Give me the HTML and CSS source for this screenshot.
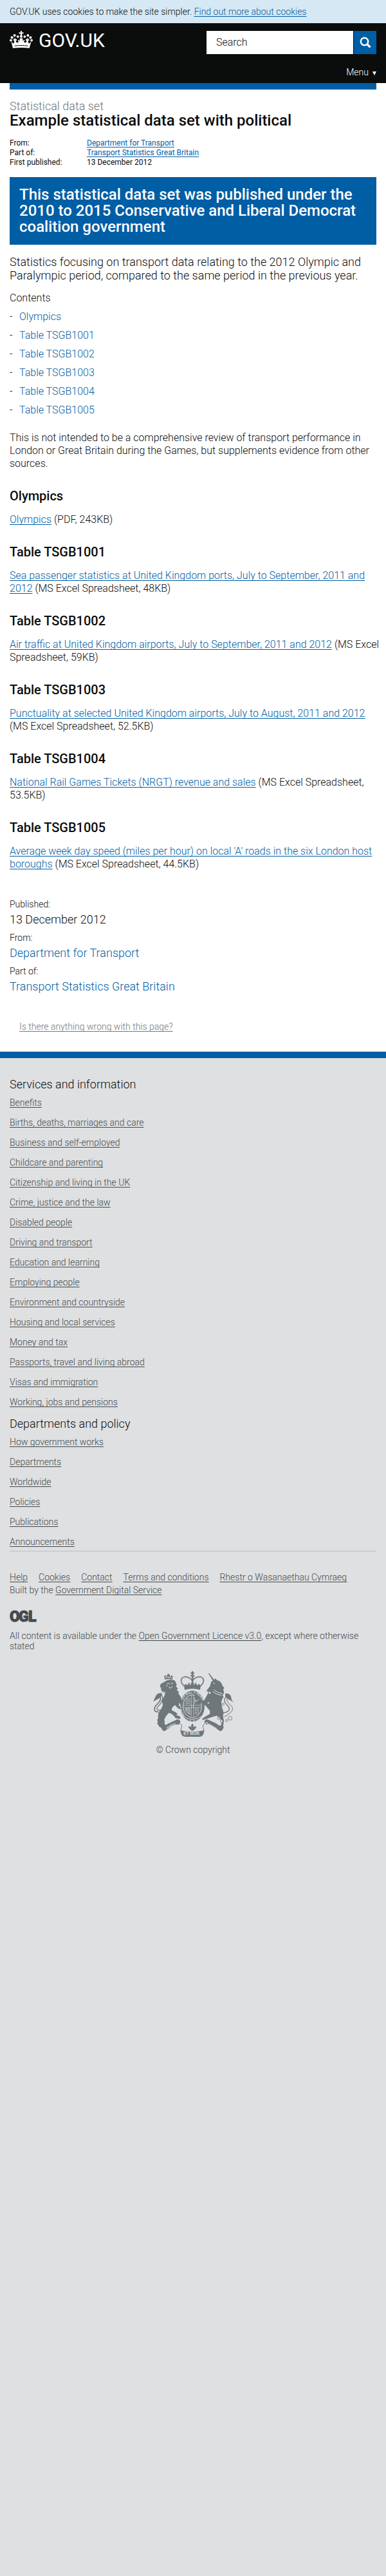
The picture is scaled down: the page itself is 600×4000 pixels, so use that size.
FILE: index.html
```html
<!DOCTYPE html>
<html lang="en">
<head>
<meta charset="utf-8">
<meta name="viewport" content="width=device-width, initial-scale=1">
<title>Example statistical data set with political - GOV.UK</title>
<link rel="stylesheet" href="styles.css">
</head>
<body>
<div class="cookie-bar"><p>GOV.UK uses cookies to make the site simpler. <a href="#">Find out more about cookies</a></p></div>

<header class="site-header">
  <div class="header-row">
    <a class="logo" href="#">
      <svg class="logo-crown" viewBox="0 0 36 27" aria-hidden="true" fill="currentColor">
        <path d="M16.8 0h2.4l-.5 2.5 2.7-.5v2.6l-2.5-.4.5 3.4h-2.8l.5-3.4-2.5.4V2l2.700.5z"/>
        <circle cx="18" cy="8.700" r="2"/>
        <circle cx="12.700" cy="8.800" r="1.900"/><circle cx="7.600" cy="7.100" r="2"/><circle cx="3.600" cy="10.200" r="2"/><circle cx="1.900" cy="14.600" r="1.900"/>
        <circle cx="23.300" cy="8.800" r="1.900"/><circle cx="28.400" cy="7.100" r="2"/><circle cx="32.400" cy="10.200" r="2"/><circle cx="34.100" cy="14.600" r="1.900"/>
        <path d="M2.4 16.4l3.5 3.4c1-1.2 1.5-3.2 1.3-5l-1.5.5v-2.6l1.8.5-.4-1.8h2.4l-.4 1.8 1.9-.5v2.6l-1.5-.5c.1 2 .8 3.5 2.3 3.5 1.400 0 2.300-1 2.400-2.500l-1.300.6v-2.600l1.600.4 1.500-2.700h4l1.500 2.700 1.600-.4v2.600l-1.300-.6c.1 1.500 1 2.500 2.400 2.500 1.500 0 2.200-1.500 2.300-3.500l-1.500.5v-2.600l1.900.5-.4-1.800h2.400l-.4 1.800 1.800-.5v2.600l-1.500-.5c-.2 1.800.3 3.800 1.300 5l3.500-3.400-3 10.400c-8-1.200-17.600-1.200-25.600 0z"/>
        <path d="M7.500 23.300c6.500-1 14.500-1 21 0" fill="none" stroke="#0b0c0c" stroke-width="1"/>
        <circle cx="15" cy="14" r="1" fill="#0b0c0c"/><circle cx="21" cy="14" r="1" fill="#0b0c0c"/>
      </svg>
      <span>GOV.UK</span>
    </a>
    <form class="search" role="search">
      <input class="search-field" type="search" placeholder="Search" aria-label="Search">
      <button class="search-button" type="button" aria-label="Search">
        <svg viewBox="0 0 18 18" aria-hidden="true" fill="none" stroke="currentColor"><circle cx="7.500" cy="7.500" r="5.700" stroke-width="2.400"/><path d="M11.500 11.500l5 4.800" stroke-width="3.200"/></svg>
      </button>
    </form>
  </div>
  <button class="menu" type="button">Menu <span class="menu-arrow"></span></button>
</header>

<main class="content">
  <div class="top-bar"></div>
  <div class="title">
    <p class="context">Statistical data set</p>
    <h1>Example statistical data set with political</h1>
  </div>
  <dl class="meta">
    <dt>From:</dt><dd><a href="#">Department for Transport</a></dd>
    <dt>Part of:</dt><dd><a href="#">Transport Statistics Great Britain</a></dd>
    <dt>First published:</dt><dd>13 December 2012</dd>
  </dl>
  <p class="notice">This statistical data set was published under the 2010 to 2015 Conservative and Liberal Democrat coalition government</p>
  <p class="lead">Statistics focusing on transport data relating to the 2012 Olympic and Paralympic period, compared to the same period in the previous year.</p>
  <nav class="contents" aria-labelledby="contents-title">
    <h2 id="contents-title">Contents</h2>
    <ul>
      <li><a href="#olympics">Olympics</a></li>
      <li><a href="#t1001">Table TSGB1001</a></li>
      <li><a href="#t1002">Table TSGB1002</a></li>
      <li><a href="#t1003">Table TSGB1003</a></li>
      <li><a href="#t1004">Table TSGB1004</a></li>
      <li><a href="#t1005">Table TSGB1005</a></li>
    </ul>
  </nav>
  <article class="prose">
    <p>This is not intended to be a comprehensive review of transport performance in London or Great Britain during the Games, but supplements evidence from other sources.</p>
    <h2 id="olympics">Olympics</h2>
    <p><a href="#">Olympics</a> (PDF, 243KB)</p>
    <h2 id="t1001">Table TSGB1001</h2>
    <p><a href="#">Sea passenger statistics at United Kingdom ports, July to September, 2011 and 2012</a> (MS Excel Spreadsheet, 48KB)</p>
    <h2 id="t1002">Table TSGB1002</h2>
    <p><a href="#">Air traffic at United Kingdom airports, July to September, 2011 and 2012</a> (MS Excel Spreadsheet, 59KB)</p>
    <h2 id="t1003">Table TSGB1003</h2>
    <p><a href="#">Punctuality at selected United Kingdom airports, July to August, 2011 and 2012</a> (MS Excel Spreadsheet, 52.5KB)</p>
    <h2 id="t1004">Table TSGB1004</h2>
    <p><a href="#">National Rail Games Tickets (NRGT) revenue and sales</a> (MS Excel Spreadsheet, 53.5KB)</p>
    <h2 id="t1005">Table TSGB1005</h2>
    <p><a href="#">Average week day speed (miles per hour) on local 'A' roads in the six London host boroughs</a> (MS Excel Spreadsheet, 44.5KB)</p>
  </article>
  <dl class="summary">
    <dt>Published:</dt><dd>13 December 2012</dd>
    <dt>From:</dt><dd><a href="#">Department for Transport</a></dd>
    <dt>Part of:</dt><dd><a href="#">Transport Statistics Great Britain</a></dd>
  </dl>
  <p class="report"><a href="#">Is there anything wrong with this page?</a></p>
</main>

<footer class="footer">
  <nav class="footer-nav" aria-label="Footer">
    <h2>Services and information</h2>
    <ul>
      <li><a href="#">Benefits</a></li>
      <li><a href="#">Births, deaths, marriages and care</a></li>
      <li><a href="#">Business and self-employed</a></li>
      <li><a href="#">Childcare and parenting</a></li>
      <li><a href="#">Citizenship and living in the UK</a></li>
      <li><a href="#">Crime, justice and the law</a></li>
      <li><a href="#">Disabled people</a></li>
      <li><a href="#">Driving and transport</a></li>
      <li><a href="#">Education and learning</a></li>
      <li><a href="#">Employing people</a></li>
      <li><a href="#">Environment and countryside</a></li>
      <li><a href="#">Housing and local services</a></li>
      <li><a href="#">Money and tax</a></li>
      <li><a href="#">Passports, travel and living abroad</a></li>
      <li><a href="#">Visas and immigration</a></li>
      <li><a href="#">Working, jobs and pensions</a></li>
    </ul>
    <h2>Departments and policy</h2>
    <ul>
      <li><a href="#">How government works</a></li>
      <li><a href="#">Departments</a></li>
      <li><a href="#">Worldwide</a></li>
      <li><a href="#">Policies</a></li>
      <li><a href="#">Publications</a></li>
      <li><a href="#">Announcements</a></li>
    </ul>
  </nav>
  <ul class="footer-links">
    <li><a href="#">Help</a></li>
    <li><a href="#">Cookies</a></li>
    <li><a href="#">Contact</a></li>
    <li><a href="#">Terms and conditions</a></li>
    <li><a href="#">Rhestr o Wasanaethau Cymraeg</a></li>
    <li class="built">Built by the <a href="#">Government Digital Service</a></li>
  </ul>
  <svg class="ogl" viewBox="0 0 42 18" role="img" aria-label="Open Government Licence"><text x="0 14 29" y="17">OGL</text></svg>
  <p class="licence">All content is available under the <a href="#">Open Government Licence v3.0</a>, except where otherwise stated</p>
  <a class="copyright" href="#">
    <svg class="crest" viewBox="24 33 375 306" aria-hidden="true" fill="currentColor">
      <defs><path id="motto" d="M173 240A47 58 0 0 1 207 138A47 58 0 0 1 241 240"/></defs>
      <!-- imperial crown -->
      <path d="M204 33h7v6h5v7h-5v6h6v6h-6v28h-7V58h-6v-6h6v-6h-5v-7h5z"/>
      <g fill="none" stroke="currentColor"><path d="M170 103C143 80 156 55 180 60C194 63 203 70 205 78M244 103C271 80 258 55 234 60C220 63 211 70 209 78" stroke-width="6" stroke-dasharray="5 1"/><path d="M176 92v14M191 86v18M222 86v18M238 92v14M170 98h12M185 94h12M216 94h12M232 98h12" stroke-width="4"/></g>
      <path d="M200 90l7-10 7 10-2 14h-10zM168 100q39-8 78 0l-3 20q-36-10-72 0z"/>
      <!-- garter and shield -->
      <ellipse cx="207" cy="196" rx="57" ry="72"/>
      <ellipse cx="207" cy="196" rx="43" ry="53" fill="none" stroke="#dee0e2" stroke-width="3"/>
      <text class="crest-motto"><textPath href="#motto">HONI SOIT QUI MAL Y PENSE</textPath></text>
      <g fill="none" stroke="#dee0e2" stroke-width="2.500">
        <path d="M202 146v96M212 146v96M166 192h82M166 202h82" stroke-width="2"/>
        <path d="M177 165q8-6 20 0M172 175q8-6 26 0M171 185q8-6 26 0M182 158v29M192 154v32" stroke-dasharray="5 3"/>
        <path d="M218 153v32M226 165q-10 10 10 18M236 160q4 10-10 12"/>
        <path d="M174 208q3 20 20 25M179 208q2 15 15 20M186 208q1 9 8 14M174 208l21-2v30"/>
        <path d="M217 211q10-6 24 0M217 220q8-6 23 0M217 230q8-6 18 0M224 206v30M234 206v27" stroke-dasharray="5 3"/>
        <path d="M162 242q45 30 90 0"/>
      </g>
      <g fill="#dee0e2"><circle cx="198" cy="262" r="3"/><circle cx="214" cy="262" r="3"/><circle cx="184" cy="256" r="2"/><circle cx="229" cy="256" r="2"/></g>
      <!-- lion -->
      <path d="M79 72l-4-15 6-5 6 6 4-10 4-4 5 4 3 10 7-6 6 6-3 14q-17-5-34 0z"/>
      <path d="M80 57l5 9 8-9 5 9 7-8 5 8" fill="none" stroke="#dee0e2" stroke-width="3"/>
      <path d="M78 82q20-16 48-5l8 18-3 10 8 7-4 10 9 7-2 9 10 13 8 22-3 25-10-18-3 11 8 12-5 8q-14-10-20-20-18 10-16 24 20 8 28 18l-9 3 18 7 5 8-5 4-20-3-4-7q-15-18-28-17-16 18-20 32l3 10-3 7 9 8-6 10-8 2-16-3-6-8-6-10 3-8-3-8 5-8q-4-20 6-33 14-18 15-30l-4-18 12-25 6-20-9 10-2-10-8 5 1-12-5 3 2-12-6-3 3-14z"/>
      <path d="M88 92l10-3 4 4M107 91l10-2M98 105l4 7 8-3 3-6M91 101h-7" fill="none" stroke="#dee0e2" stroke-width="3"/>
      <path d="M50 222C20 226 30 198 42 188C60 172 64 160 56 146" fill="none" stroke="currentColor" stroke-width="5"/>
      <path d="M62 214C26 216 46 198 54 190C69 174 74 154 60 141" fill="none" stroke="currentColor" stroke-width="4"/>
      <path d="M66 136q-23-6-32 18l-9 21 24-14q13-4 17-25z"/>
      <!-- unicorn -->
      <path d="M281 41l6 3 28 38-7 5z"/>
      <path d="M289 103l6-21 13-6 5-10 9 9 14 5 8 12 5 12 7 5-5 10 4 14-7 14 5 7-7 8-4 16 4 27 7 20-3 18 4 20-3 24-7 13-14 1 7-11 6-13-3-18-18-18-12 2-29 10-28 8 2-9 34-20-1-15-18-22-18-17-12 11-11-2-4-9 8-2 5-12-10-12-9 4-7-7 10-6 16 9 8 12 15 7 16-29 6-13-12-4-4 8z"/>
      <path d="M307 119q18 17 40 18M302 127q18 18 42 18M304 88l8 4" fill="none" stroke="#dee0e2" stroke-width="3"/>
      <path d="M288 148q-9 5-6 14M347 228q24-3 31-13C385 202 370 192 363 184C353 172 356 160 365 153" fill="none" stroke="currentColor" stroke-width="4"/>
      <path d="M355 246q37-20 39-34C398 193 373 188 369 170q-1-8 2-15" fill="none" stroke="currentColor" stroke-width="3"/>
      <path d="M360 138q15-5 26 10l5 20 8 10-23-14-15-10z"/>
      <g fill="#dee0e2" stroke="currentColor" stroke-width="2.500"><circle cx="288" cy="134" r="6"/><circle cx="282" cy="181" r="5"/><circle cx="350" cy="187" r="5"/><circle cx="330" cy="252" r="6"/><circle cx="343" cy="266" r="6"/><circle cx="367" cy="263" r="5"/><circle cx="383" cy="252" r="9"/></g>
      <!-- scrolls -->
      <path d="M60 292q18-2 35-15l42-20q14 0 14 16l-7 9q-22-5-42 14l-26 17q-10-2-16-21zM354 292q-18-2-35-15l-42-20q-14 0-14 16l7 9q22-5 42 14l26 17q10-2 16-21z"/>
      <path d="M150 280q12 4 6 15l-3 14 3 16q5 11 15 12 36 4 72 0 10-1 15-12l3-16-3-14q-6-11 6-15" fill="none" stroke="currentColor" stroke-width="3"/>
      <path d="M152 308q54 14 110 0l-8 26q-47 8-94 0z"/>
      <path d="M207 276l6 10-2 8 10-5 5 6-8 9-11 8-11-8-8-9 5-6 10 5-2-8z"/>
      <text class="crest-text" x="166" y="331">ET MON</text>
      <text class="crest-text" x="92" y="307" transform="rotate(-31 92 307)">DIEU</text>
      <text class="crest-text" x="264" y="280" transform="rotate(31 264 280)">DROIT</text>
    </svg>
    <span>© Crown copyright</span>
  </a>
</footer>
</body>
</html>
```
FILE: styles.css
```css
* { box-sizing: border-box; }
html { background: #dee0e2; }
body { margin: 0; color: #0b0c0c; font: 300 16px/20px Roboto, "Liberation Sans", sans-serif; }
h1, h2, p, ul, dl, dd { margin: 0; padding: 0; font-weight: 300; }
ul { list-style: none; }
a { color: #005ea5; text-underline-offset: 2px; text-decoration-thickness: 1px; text-decoration-skip-ink: none; }
button, input { font: inherit; border: 0; border-radius: 0; margin: 0; }

.cookie-bar { padding: 8px 15px; background: #d5e8f3; font-size: 14px; }

.site-header { display: flex; flex-direction: column; padding: 12px 15px 6px; background: #0b0c0c; color: #fff; }
.header-row { display: flex; justify-content: space-between; align-items: flex-start; }
.logo { display: flex; gap: 9px; color: #fff; font-size: 30px; line-height: 30px; font-weight: 400; text-decoration: none; }
.logo-crown { width: 36px; height: 27px; }
.search { display: flex; gap: 1px; flex: 0 0 46%; height: 36px; max-width: 264px; }
.search-field { flex: 1; min-width: 0; padding: 0 15px; background: #fff; color: #0b0c0c; appearance: none; }
.search-field::placeholder { color: #0b0c0c; opacity: 1; }
.search-button { display: grid; place-items: center; width: 35px; padding: 0; background: #005ea5; color: #fff; }
.search-button svg { width: 18px; height: 18px; }
.menu { display: flex; align-items: center; gap: 6px; align-self: flex-end; margin-top: 18px; padding: 0; background: none; color: #fff; font-size: 14px; line-height: 21px; }
.menu-arrow { margin-top: 3px; border: 3px solid transparent; border-top: 6px solid #fff; border-bottom: 0; }

.content { padding: 0 15px 29px; background: #fff; }
.top-bar { height: 10px; background: #005ea5; }
.title { padding: 15px 0; }
.context { color: #6f777b; font-size: 18px; line-height: 21px; }
h1 { font-size: 24px; line-height: 25px; font-weight: 500; }
.meta { display: grid; grid-template-columns: 120px 1fr; font-size: 12px; line-height: 15px; font-weight: 400; }
.meta dd { font-weight: 400; }
.notice { margin-top: 15px; padding: 15px; background: #005ea5; color: #fff; font-size: 24px; line-height: 25px; font-weight: 500; }
.lead { padding: 16px 0 15px; font-size: 18px; line-height: 21px; }
.contents h2 { font-size: 16px; }
.contents li { display: flex; margin-top: 9px; }
.contents li::before { content: "-"; flex: 0 0 15px; }
.contents a { text-decoration: none; }
.prose { margin-right: -6px; padding-top: 23px; }
.prose h2 { margin: 30px 0 17px; font-size: 20px; font-weight: 500; }
.summary { margin-top: 42px; font-size: 18px; line-height: 28px; }
.summary dt { font-size: 14px; line-height: 20px; }
.summary dd { margin-bottom: 4px; }
.summary a { text-decoration: none; }
.report { margin-top: 38px; padding-left: 15px; font-size: 14px; }
.report a { color: #6f777b; }

.footer { padding: 29px 15px 60px; border-top: 10px solid #005ea5; color: #454a4c; font-size: 14px; }
.footer a { color: #454a4c; }
.footer-nav { border-bottom: 1px solid #bbbec0; padding-bottom: 4px; }
.footer-nav h2 { padding-bottom: 6px; color: #0b0c0c; font-size: 18px; line-height: 24px; }
.footer-nav ul { display: grid; gap: 11px; }
.footer-nav ul + h2 { padding-top: 12px; }
.footer-links { display: flex; flex-wrap: wrap; column-gap: 17px; margin-top: 30px; }
.built { flex-basis: 100%; }
.ogl { display: block; width: 42px; height: 18px; margin: 22px 0 13px; fill: currentColor; stroke: currentColor; font: 900 23px Roboto, sans-serif; overflow: visible; }
.licence { line-height: 16px; }
.copyright { display: flex; flex-direction: column; align-items: center; gap: 10px; margin-top: 31px; }
.footer .copyright { text-decoration: none; }
.crest { width: 125px; height: 102px; color: #6f777b; }
.crest-text, .crest-motto { fill: #dee0e2; font: 700 19px "Liberation Sans", sans-serif; }
.crest-motto { font-size: 14px; }
```
